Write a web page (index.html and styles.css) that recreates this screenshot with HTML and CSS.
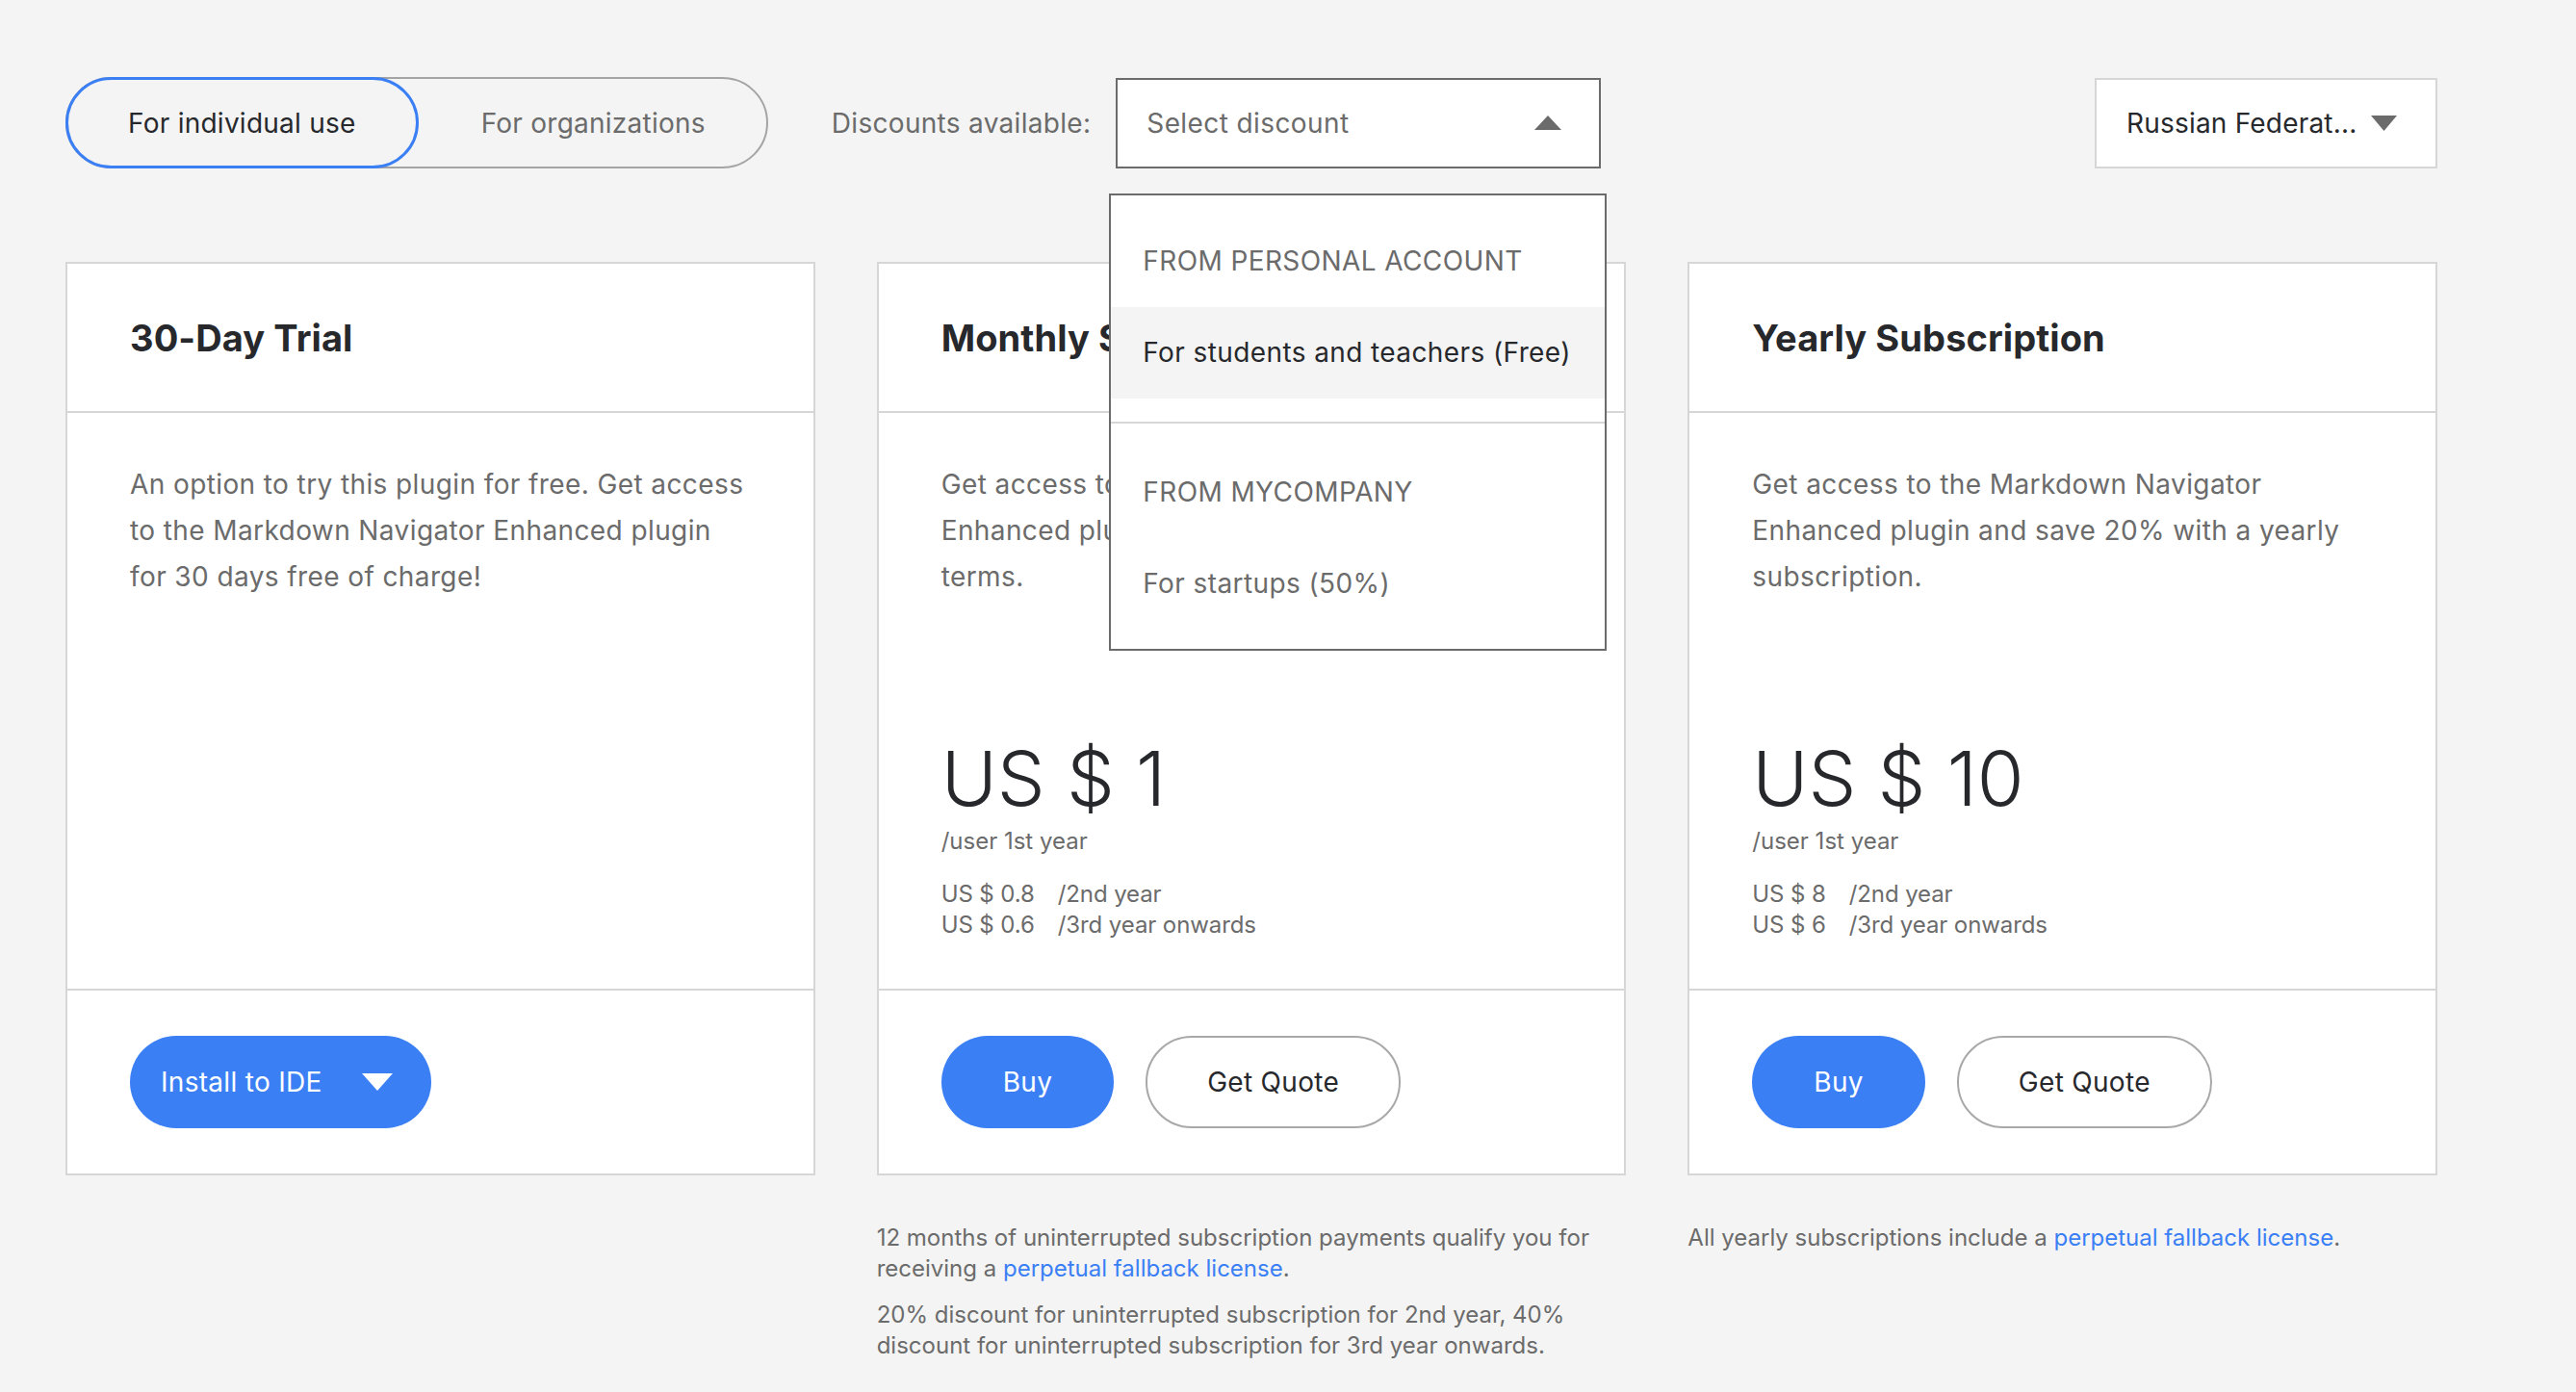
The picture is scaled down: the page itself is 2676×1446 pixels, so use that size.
FILE: index.html
```html
<!DOCTYPE html>
<html lang="en">
<head>
<meta charset="utf-8">
<title>Pricing</title>
<link rel="stylesheet" href="styles.css">
</head>
<body>
<div class="page">
  <div class="topbar">
    <div class="toggle">
      <button class="seg seg-active">For individual use</button>
      <button class="seg seg-idle">For organizations</button>
    </div>
    <span class="disc-label">Discounts available:</span>
    <div class="select-wrap">
      <div class="select">
        <span>Select discount</span>
        <svg class="tri" width="28" height="15" viewBox="0 0 28 15"><path d="M14 0L28 15H0Z" fill="#6b6b6b"/></svg>
      </div>
      <div class="menu">
        <div class="menu-item menu-head">From personal account</div>
        <div class="menu-item menu-hl">For students and teachers (Free)</div>
        <div class="menu-sep"></div>
        <div class="menu-item menu-head">From MyCompany</div>
        <div class="menu-item">For startups (50%)</div>
      </div>
    </div>
    <div class="region">
      <span>Russian Federat...</span>
      <svg class="tri" width="27" height="16" viewBox="0 0 27 16"><path d="M0 0H27L13.5 16Z" fill="#6b6b6b"/></svg>
    </div>
  </div>

  <div class="cards">
    <div class="col">
      <div class="card">
        <div class="card-head"><h2>30-Day Trial</h2></div>
        <div class="card-body">
          <p class="desc">An option to try this plugin for free. Get access to the Markdown Navigator Enhanced plugin for 30 days free of charge!</p>
        </div>
        <div class="card-foot">
          <button class="btn btn-primary btn-install">
            <span>Install to IDE</span>
            <svg width="32" height="18" viewBox="0 0 32 18"><path d="M0 0H32L16 18Z" fill="#ffffff"/></svg>
          </button>
        </div>
      </div>
    </div>

    <div class="col">
      <div class="card">
        <div class="card-head"><h2>Monthly Subscription</h2></div>
        <div class="card-body">
          <p class="desc">Get access to the Markdown Navigator Enhanced plugin with monthly subscription terms.</p>
          <div class="price">
            <div class="amount">US $ 1</div>
            <div class="per">/user 1st year</div>
            <div class="rows">
              <span>US $ 0.8</span><span>/2nd year</span>
              <span>US $ 0.6</span><span>/3rd year onwards</span>
            </div>
          </div>
        </div>
        <div class="card-foot">
          <button class="btn btn-primary">Buy</button>
          <button class="btn btn-outline">Get Quote</button>
        </div>
      </div>
      <div class="notes">
        <p>12 months of uninterrupted subscription payments qualify you for receiving a <a href="#">perpetual fallback license</a>.</p>
        <p>20% discount for uninterrupted subscription for 2nd year, 40% discount for uninterrupted subscription for 3rd year onwards.</p>
      </div>
    </div>

    <div class="col">
      <div class="card">
        <div class="card-head"><h2>Yearly Subscription</h2></div>
        <div class="card-body">
          <p class="desc">Get access to the Markdown Navigator Enhanced plugin and save 20% with a yearly subscription.</p>
          <div class="price">
            <div class="amount">US $ 10</div>
            <div class="per">/user 1st year</div>
            <div class="rows">
              <span>US $ 8</span><span>/2nd year</span>
              <span>US $ 6</span><span>/3rd year onwards</span>
            </div>
          </div>
        </div>
        <div class="card-foot">
          <button class="btn btn-primary">Buy</button>
          <button class="btn btn-outline">Get Quote</button>
        </div>
      </div>
      <div class="notes">
        <p>All yearly subscriptions include a <a href="#">perpetual fallback license</a>.</p>
      </div>
    </div>
  </div>
</div>
</body>
</html>
```

FILE: styles.css
```css
* { box-sizing: border-box; }

body {
  margin: 0;
  background: #f4f4f4;
  font-family: Inter, "Noto Sans", sans-serif;
  color: #27282c;
}

.page {
  width: 2532px;
  padding: 80px 0 0 68px;
}

/* top bar */
.topbar {
  display: flex;
  align-items: center;
  height: 95px;
}

.toggle {
  display: flex;
  height: 95px;
  border: 2px solid #a4a4a4;
  border-radius: 48px;
}

.seg {
  font-family: inherit;
  font-size: 28px;
  letter-spacing: 0.25px;
  background: none;
  border: 3px solid transparent;
  border-radius: 48px;
  margin: -2px 0;
  height: 95px;
  display: flex;
  align-items: center;
  cursor: pointer;
}

.seg-active {
  margin-left: -2px;
  border-color: #3b7ff5;
  color: #27282c;
  padding: 0 62px;
}

.seg-idle {
  color: #6b6b6b;
  padding: 0 60px 0 62px;
}

.disc-label {
  margin-left: 66px;
  font-size: 28px;
  letter-spacing: 0.3px;
  color: #6b6b6b;
}

.select-wrap {
  position: relative;
  margin-left: 26px;
}

.select {
  width: 504px;
  height: 94px;
  border: 2px solid #6b6b6b;
  background: #fff;
  display: flex;
  align-items: center;
  justify-content: space-between;
  padding: 0 39px 0 30px;
  font-size: 28px;
  letter-spacing: 0.4px;
  color: #6b6b6b;
}

.menu {
  position: absolute;
  top: 120px;
  left: -7px;
  width: 517px;
  border: 2px solid #6b6b6b;
  background: #fff;
  padding: 21px 0 20px;
  z-index: 10;
}

.menu-item {
  height: 95px;
  display: flex;
  align-items: center;
  padding: 0 33px;
  font-size: 28px;
  letter-spacing: 0.4px;
  color: #6b6b6b;
}

.menu-head { text-transform: uppercase; }

.menu-hl {
  background: #f4f4f4;
  color: #27282c;
}

.menu-sep {
  height: 2px;
  background: #d6d6d6;
  margin: 24px 0;
}

.region {
  margin-left: auto;
  width: 356px;
  height: 94px;
  border: 2px solid #d6d6d6;
  background: #fff;
  display: flex;
  align-items: center;
  gap: 14px;
  padding-left: 31px;
  font-size: 28px;
  letter-spacing: 0.2px;
  color: #27282c;
}

/* cards */
.cards {
  margin-top: 97px;
  display: grid;
  grid-template-columns: repeat(3, 1fr);
  column-gap: 64px;
}

.card {
  background: #fff;
  border: 2px solid #d6d6d6;
  display: flex;
  flex-direction: column;
}

.card-head {
  height: 155px;
  display: flex;
  align-items: center;
  padding: 0 65px;
  border-bottom: 2px solid #d6d6d6;
}

.card-head h2 {
  margin: 0;
  font-size: 38px;
  font-weight: 700;
  letter-spacing: 0.1px;
  color: #27282c;
}

.card-body {
  height: 600px;
  padding: 50px 65px 50px;
  display: flex;
  flex-direction: column;
  border-bottom: 2px solid #d6d6d6;
}

.desc {
  margin: 0;
  font-size: 28px;
  letter-spacing: 0.4px;
  line-height: 48px;
  color: #6b6b6b;
}

.price { margin-top: auto; }

.amount {
  font-family: "Inter Light", Inter, "Noto Sans", sans-serif;
  font-size: 79px;
  font-weight: 300;
  line-height: 76px;
  color: #27282c;
}

.per {
  margin-top: 12px;
  font-size: 24px;
  line-height: 32px;
  color: #6b6b6b;
}

.rows {
  margin-top: 23px;
  display: grid;
  grid-template-columns: auto 1fr;
  column-gap: 24px;
  font-size: 24px;
  letter-spacing: -0.1px;
  line-height: 32px;
  color: #6b6b6b;
}

.card-foot {
  height: 190px;
  display: flex;
  align-items: center;
  gap: 33px;
  padding: 0 65px;
}

.btn {
  font-family: inherit;
  font-size: 28px;
  letter-spacing: 0.3px;
  height: 96px;
  border-radius: 48px;
  display: flex;
  align-items: center;
  cursor: pointer;
}

.btn-primary {
  background: #3b7ff5;
  color: #fff;
  border: none;
  padding: 0 64px;
}

.btn-install {
  padding: 0 40px 0 32px;
  gap: 41px;
}

.btn-outline {
  background: #fff;
  color: #27282c;
  border: 2px solid #a8a8a8;
  padding: 0 62px;
}

/* notes */
.notes {
  margin-top: 49px;
  font-size: 24px;
  line-height: 32px;
  color: #6b6b6b;
}

.notes p { margin: 0 0 16px; }

.notes a {
  color: #3b7ff5;
  text-decoration: none;
}
```
